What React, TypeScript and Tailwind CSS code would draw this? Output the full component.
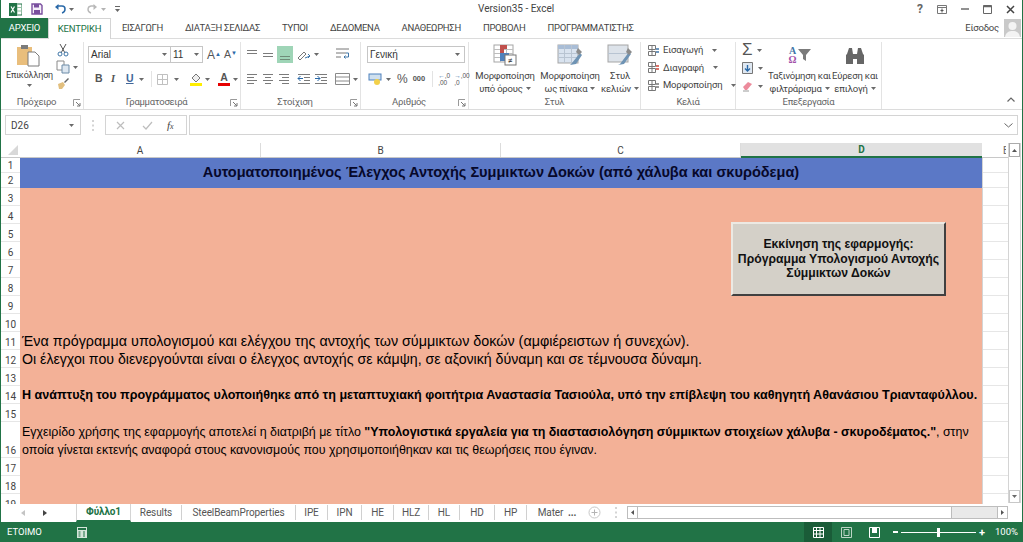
import React from "react";

const ui = "font-['Roboto',sans-serif]";

function Caret({ className = "" }: { className?: string }) {
  return (
    <svg width="5" height="3" viewBox="0 0 5 3" className={className}>
      <path d="M0 0h5L2.500 3z" fill="#6a6a6a" />
    </svg>
  );
}

function Launcher() {
  return (
    <svg width="8" height="8" viewBox="0 0 8 8">
      <path d="M0.500 7V0.500H7" fill="none" stroke="#9a9a9a" />
      <path d="M3 3l4 4M7 4v3H4" fill="none" stroke="#777" />
    </svg>
  );
}

function Lines({ rows, active, arrow }: { rows: number[][]; active?: boolean; arrow?: "in" | "out" }) {
  return (
    <svg width="16" height="14" viewBox="0 0 16 14">
      {rows.map((r, i) => (
        <path key={i} d={`M${r[0]} ${r[2]}.500H${r[1]}`} stroke={active ? "#6f8c78" : "#7b7b7b"} />
      ))}
      {arrow === "out" && <path d="M8 6.500H3M5.500 4L3 6.500 5.500 9" fill="none" stroke="#2a69a8" />}
      {arrow === "in" && <path d="M3 6.500h5M5.500 4L8 6.500 5.500 9" fill="none" stroke="#2a69a8" />}
    </svg>
  );
}

function Group({ label, launcher, width, children }: { label: string; launcher?: boolean; width: string; children: React.ReactNode }) {
  return (
    <div className={`${width} shrink-0 h-[67px] flex flex-col border-r border-[#e3e3e3]`}>
      <div className="h-[54px] flex">{children}</div>
      <div className={`h-[12px] flex items-center relative text-[9.500px] text-[#666] tracking-[-0.3px] ${launcher ? "pr-[11px]" : ""}`}>
        <div className="flex-1 text-center">{label}</div>
        {launcher && <div className="absolute right-[2px] top-[3px]"><Launcher /></div>}
      </div>
    </div>
  );
}

function BigLabel({ l1, l2, caret }: { l1: string; l2: string; caret?: boolean }) {
  return (
    <div className="text-[9.500px] tracking-[-0.2px] leading-[13px] text-[#444] text-center whitespace-nowrap mt-[3px]">
      <div>{l1}</div>
      <div className="flex items-center justify-center gap-[3px]">{l2}{caret && <Caret />}</div>
    </div>
  );
}

function TableIcon({ variant }: { variant: "cond" | "table" | "cell" }) {
  if (variant === "cond")
    return (
      <svg width="24" height="22" viewBox="0 0 24 22">
        <rect x="1" y="1" width="19" height="17" fill="#fff" stroke="#a5a5a5" />
        <path d="M1 5.500h19M1 9.500h19M1 13.500h19M7.500 1v17M13.500 1v17" stroke="#bdbdbd" />
        <rect x="7" y="1" width="7" height="4" fill="#c0504d" />
        <rect x="7" y="5" width="4" height="4" fill="#c0504d" />
        <rect x="7" y="9" width="9" height="4" fill="#4f81bd" />
        <rect x="7" y="13" width="5" height="4" fill="#4f81bd" />
        <rect x="12" y="11" width="11" height="10" fill="#fff" stroke="#777" />
        <text x="14.500" y="19.500" fontSize="9" fill="#333">≠</text>
      </svg>
    );
  if (variant === "table")
    return (
      <svg width="26" height="22" viewBox="0 0 26 22">
        <rect x="1" y="1" width="20" height="18" fill="#d9e3ef" stroke="#a5a5a5" />
        <rect x="1" y="1" width="20" height="4" fill="#a9bdd6" />
        <path d="M1 9.500h20M1 13.500h20M7.500 1v18M14.500 1v18" stroke="#b8c4d2" />
        <path d="M15 19l8-10 2 2-6 9-6 1z" fill="#6e93b4" />
        <path d="M21 4l4 4-3 3-3-3z" fill="#8b8b8b" />
      </svg>
    );
  return (
    <svg width="26" height="22" viewBox="0 0 26 22">
      <rect x="1" y="1" width="20" height="17" fill="#dde3ea" stroke="#a5a5a5" />
      <path d="M1 9.500h20" stroke="#b8c4d2" />
      <path d="M13 20l9-12 2 2-7 10-6 1z" fill="#6e93b4" />
      <path d="M21 4l4 4-3 3-3-3z" fill="#8b8b8b" />
    </svg>
  );
}

const TAB_CLS = "text-[9.500px] tracking-[-0.3px] text-[#444] whitespace-nowrap";

function TitleBar() {
  return (
    <div className="h-[18px] flex items-center relative">
      <div className="flex items-center ml-[8px]">
        <svg width="13" height="13" viewBox="0 0 13 13">
          <rect x="5" y="1" width="8" height="11" fill="#fff" stroke="#217346" />
          <path d="M8 1v11M5 4.500h8M5 8h8" stroke="#8fbf9f" />
          <rect x="0" y="0" width="8" height="13" fill="#217346" />
          <path d="M2 3.500l3.500 6M5.500 3.500l-3.500 6" stroke="#fff" strokeWidth="1.200" />
        </svg>
        <svg width="12" height="12" viewBox="0 0 12 12" className="ml-[9px]">
          <path d="M1 1h8.500L11 2.500V11H1z" fill="#f4eff8" stroke="#7a4f9f" strokeWidth="1.400" />
          <rect x="3" y="1" width="5" height="3.500" fill="#7a4f9f" />
          <rect x="3" y="7" width="6" height="4" fill="#7a4f9f" />
        </svg>
        <svg width="12" height="11" viewBox="0 0 12 11" className="ml-[11px]">
          <path d="M3 2h5a3 3 0 0 1 3 3v0a4 4 0 0 1-3 4" fill="none" stroke="#2a69a8" strokeWidth="1.500" />
          <path d="M4.500 0L1 3l3.500 3z" fill="#2a69a8" />
        </svg>
        <Caret className="ml-[3px]" />
        <svg width="12" height="11" viewBox="0 0 12 11" className="ml-[12px]">
          <path d="M9 2H5a3.500 3.500 0 0 0-3 3 4 4 0 0 0 3 4" fill="none" stroke="#b9b9b9" strokeWidth="1.400" />
          <path d="M7.500 0L11 3 7.500 6z" fill="#b9b9b9" />
        </svg>
        <Caret className="ml-[3px] opacity-50" />
        <svg width="5" height="7" viewBox="0 0 5 7" className="ml-[9px]">
          <path d="M0 .500h5" stroke="#666" />
          <path d="M0 3h5L2.500 6z" fill="#666" />
        </svg>
      </div>
      <div className="absolute left-[477px] top-[2px] text-[10px] leading-[14px] text-[#444] whitespace-nowrap">Version35 - Excel</div>
      <div className="ml-auto flex items-center text-[#555] mr-[7px]">
        <span className="text-[12px] leading-none font-bold text-[#666]">?</span>
        <svg width="10" height="9" viewBox="0 0 10 9" className="ml-[14px]">
          <path d="M.500.500h9v8h-9zM.500 2.500h9" fill="none" stroke="#777" />
          <path d="M5 3.500v4M3.500 5.500h3" stroke="#555" />
        </svg>
        <svg width="8" height="2" viewBox="0 0 8 2" className="ml-[14px]"><path d="M0 1h8" stroke="#555" strokeWidth="1.300" /></svg>
        <svg width="9" height="9" viewBox="0 0 9 9" className="ml-[14px]">
          <path d="M.500.500h8v8h-8z" fill="none" stroke="#666" />
          <path d="M0 1.500h9" stroke="#666" strokeWidth="1.500" />
        </svg>
        <svg width="9" height="9" viewBox="0 0 9 9" className="ml-[14px]">
          <path d="M1 1l7 7M8 1l-7 7" stroke="#444" strokeWidth="1.500" />
        </svg>
      </div>
    </div>
  );
}

function TabRow() {
  return (
    <div className="h-[20px] flex items-stretch">
      <div className="w-[47px] bg-[#217346] text-white text-[9.500px] tracking-[-0.2px] flex items-center justify-center">ΑΡΧΕΙΟ</div>
      <div className="w-[63px] -mb-px z-10 bg-white border-x border-t border-[#d4d4d4] text-[#217346] text-[9.500px] tracking-[-0.2px] flex items-center justify-center">ΚΕΝΤΡΙΚΗ</div>
      <div className={`${TAB_CLS} ml-[11px] flex items-center gap-[22px]`}>
        <span>ΕΙΣΑΓΩΓΗ</span>
        <span>ΔΙΑΤΑΞΗ ΣΕΛΙΔΑΣ</span>
        <span>ΤΥΠΟΙ</span>
        <span>ΔΕΔΟΜΕΝΑ</span>
        <span>ΑΝΑΘΕΩΡΗΣΗ</span>
        <span>ΠΡΟΒΟΛΗ</span>
        <span>ΠΡΟΓΡΑΜΜΑΤΙΣΤΗΣ</span>
      </div>
      <div className="ml-auto flex items-center mr-[1px]">
        <span className="text-[9.500px] tracking-[-0.2px] text-[#444] mr-[5px]">Είσοδος</span>
        <svg width="17" height="18" viewBox="0 0 17 18">
          <rect width="17" height="18" fill="#c9c9c9" />
          <circle cx="8.500" cy="7" r="4" fill="#f3f3f3" />
          <path d="M1 18c1-5 4-6 7.500-6s6.500 1 7.500 6z" fill="#f3f3f3" />
        </svg>
      </div>
    </div>
  );
}

function Ribbon() {
  const combo = "h-[17px] bg-white border border-[#c6c6c6] flex items-center text-[10px] text-[#333] font-['Liberation_Sans',sans-serif]";
  return (
    <div className="h-[72px] bg-white border-y border-[#dcdcdc] flex pt-[3px] text-[#444]">
      <Group label="Πρόχειρο" launcher width="w-[83px]">
        <div className="w-[52px] flex flex-col items-center">
          <svg width="24" height="24" viewBox="0 0 24 24" className="mt-[1px] ml-[2px]">
            <rect x="1" y="4" width="15" height="18" fill="#e9be7c" />
            <rect x="5" y="2" width="7" height="4" fill="#7b7b7b" />
            <path d="M12 9h7l4 4v10H12z" fill="#fff" stroke="#7b7b7b" />
          </svg>
          <div className="text-[9px] tracking-[-0.2px] leading-[12px] mt-[2px] ml-[5px]">Επικόλληση</div>
          <Caret className="mt-[3px] ml-[4px]" />
        </div>
        <div className="flex flex-col ml-[2px] gap-[3px] pt-[1px]">
          <svg width="12" height="14" viewBox="0 0 12 14" className="ml-[2px]">
            <path d="M3 1l5 9M9 1L4 10" stroke="#555" />
            <circle cx="3" cy="11" r="2" fill="none" stroke="#3f76a8" />
            <circle cx="9" cy="11" r="2" fill="none" stroke="#3f76a8" />
          </svg>
          <div className="flex items-center gap-[3px]">
            <svg width="14" height="14" viewBox="0 0 14 14" className="ml-[1px]">
              <path d="M1 1h7v9H1z" fill="#fff" stroke="#8a8a8a" />
              <path d="M6 5h7v8H6z" fill="#dce6f0" stroke="#6c8ca8" />
            </svg>
            <Caret />
          </div>
          <svg width="14" height="13" viewBox="0 0 14 13" className="ml-[1px]">
            <path d="M8 5l4-4 1 1-4 4z" fill="#666" />
            <path d="M2 7l5-2 2 3-3 4H3z" fill="#e2bf7e" />
          </svg>
        </div>
      </Group>

      <Group label="Γραμματοσειρά" launcher width="w-[157px]">
        <div className="flex flex-col pl-[4px] pt-[4px]">
          <div className="flex items-center">
            <div className={`${combo} w-[83px] pl-[2px] pr-[3px] justify-between`}>Arial<Caret /></div>
            <div className={`${combo} w-[33px] -ml-px pl-[2px] pr-[3px] justify-between`}>11<Caret /></div>
            <span className="ml-[4px] text-[12px] leading-none text-[#555] font-['Liberation_Sans',sans-serif]">A<sup className="text-[6px] text-[#2a69a8]">▲</sup></span>
            <span className="ml-[3px] text-[10.500px] leading-none text-[#555] font-['Liberation_Sans',sans-serif]">A<sup className="text-[6px] text-[#2a69a8]">▼</sup></span>
          </div>
          <div className="flex items-center h-[18px] mt-[7px] pl-[7px] font-['Liberation_Sans',sans-serif] text-[10.500px] text-[#555]">
            <span className="w-[14px] font-bold">B</span>
            <span className="w-[17px] font-['Liberation_Serif',serif] italic font-bold pl-[2px]">I</span>
            <span className="w-[12px] underline font-bold text-[#41679a]">U</span>
            <Caret className="ml-[1px]" />
            <span className="w-px h-[16px] bg-[#e3e3e3] ml-[7px]" />
            <svg width="11" height="11" viewBox="0 0 11 11" className="ml-[5px]">
              <path d="M.500.500h10v10H.500zM.500 5.500h10M5.500.500v10" fill="none" stroke="#c0c0c0" />
            </svg>
            <Caret className="ml-[6px]" />
            <svg width="12" height="14" viewBox="0 0 12 14" className="ml-[11px]">
              <path d="M2 6l4-4 4 4-4 4z" fill="#eee" stroke="#777" />
              <rect x="0" y="11" width="12" height="3" fill="#ffee00" />
            </svg>
            <Caret className="ml-[3px]" />
            <div className="ml-[8px] flex flex-col items-center w-[12px] leading-[11px] font-bold text-[#555]">
              A<span className="w-[12px] h-[3px] bg-[#e60000]" />
            </div>
            <Caret className="ml-[3px]" />
          </div>
        </div>
      </Group>

      <Group label="Στοίχιση" launcher width="w-[120px]">
        <div className="flex flex-col pl-[3px] w-[87px]">
          <div className="flex items-center h-[17px] mt-[4px]">
            <div className="w-[16px]"><Lines rows={[[3, 13, 2], [3, 13, 5]]} /></div>
            <div className="w-[16px]"><Lines rows={[[3, 13, 5], [3, 13, 8]]} /></div>
            <div className="w-[16px] h-[17px] ml-[1px] bg-[#9fd5b7] flex items-end pb-[1px]"><Lines rows={[[3, 13, 8], [3, 13, 11]]} active /></div>
            <svg width="14" height="12" viewBox="0 0 14 12" className="ml-[4px]">
              <path d="M1 9l6-6 2 2-6 6z" fill="none" stroke="#777" />
              <path d="M8 9l5-2M11 5l2 2-2 2" fill="none" stroke="#3f76a8" />
            </svg>
            <Caret className="ml-[3px]" />
          </div>
          <div className="flex items-center h-[16px] mt-[8px]">
            <div className="w-[16px]"><Lines rows={[[3, 13, 2], [3, 10, 5], [3, 13, 8], [3, 10, 11]]} /></div>
            <div className="w-[16px]"><Lines rows={[[3, 13, 2], [5, 11, 5], [3, 13, 8], [5, 11, 11]]} /></div>
            <div className="w-[19px]"><Lines rows={[[3, 13, 2], [6, 13, 5], [3, 13, 8], [6, 13, 11]]} /></div>
            <div className="w-[17px]"><Lines rows={[[3, 15, 2], [9, 15, 5], [9, 15, 8], [3, 15, 11]]} arrow="out" /></div>
            <div className="w-[16px]"><Lines rows={[[3, 15, 2], [9, 15, 5], [9, 15, 8], [3, 15, 11]]} arrow="in" /></div>
          </div>
        </div>
        <div className="flex flex-col pl-[7px]">
          <svg width="15" height="13" viewBox="0 0 15 13" className="mt-[5px]">
            <path d="M1 2h13M1 6h10M1 10h5" stroke="#777" />
            <path d="M11 6h2.500v4H9M10.500 8.500L9 10l1.500 1.500" fill="none" stroke="#3f76a8" />
          </svg>
          <div className="flex items-center mt-[13px] gap-[3px]">
            <svg width="15" height="12" viewBox="0 0 15 12">
              <path d="M.500.500h14v11H.500zM.500 4h14M.500 8h14" fill="none" stroke="#8a8a8a" />
            </svg>
            <Caret />
          </div>
        </div>
      </Group>

      <Group label="Αριθμός" launcher width="w-[108px]">
        <div className="flex flex-col pl-[6px] pt-[4px]">
          <div className={`${combo} w-[98px] pl-[2px] pr-[4px] justify-between`}>Γενική<Caret /></div>
          <div className="flex items-center mt-[8px] h-[16px] font-['Liberation_Sans',sans-serif]">
            <svg width="15" height="13" viewBox="0 0 15 13" className="ml-[1px]">
              <rect x="1" y="1" width="12" height="6" fill="#cfe0ef" stroke="#4f81bd" />
              <circle cx="9" cy="9" r="3" fill="#f2d04a" />
            </svg>
            <Caret className="ml-[3px]" />
            <span className="ml-[6px] text-[12px] text-[#555]">%</span>
            <span className="ml-[5px] text-[7.500px] text-[#555] font-bold">000</span>
            <span className="w-px h-[16px] bg-[#e3e3e3] ml-[7px]" />
            <div className="ml-[5px] text-[6.500px] leading-[7px] text-[#555] w-[16px] whitespace-nowrap"><span className="text-[#3f76a8]">←</span>,0<br />,00</div>
            <div className="ml-[0px] text-[6.500px] leading-[7px] text-[#555] w-[15px] whitespace-nowrap"><span className="text-[#3f76a8]">→</span>,00<br />,0</div>
          </div>
        </div>
      </Group>

      <Group label="Στυλ" width="w-[172px]">
        <div className="w-[66px] flex flex-col items-center pt-[2px] ml-[3px]">
          <TableIcon variant="cond" />
          <BigLabel l1="Μορφοποίηση" l2="υπό όρους" caret />
        </div>
        <div className="w-[64px] flex flex-col items-center pt-[2px]">
          <TableIcon variant="table" />
          <BigLabel l1="Μορφοποίηση" l2="ως πίνακα" caret />
        </div>
        <div className="w-[36px] flex flex-col items-center pt-[2px]">
          <TableIcon variant="cell" />
          <BigLabel l1="Στυλ" l2="κελιών" caret />
        </div>
      </Group>

      <Group label="Κελιά" width="w-[95px]">
        <div className="flex flex-col pl-[7px] pt-[1px] gap-[3.500px] text-[9.500px] tracking-[-0.2px] leading-[14px]">
          {[["Εισαγωγή", "#3f76a8"], ["Διαγραφή", "#d04437"], ["Μορφοποίηση", "#777"]].map(([t, c]) => (
            <div key={t} className="flex items-center h-[14px] gap-[3px]">
              <svg width="12" height="11" viewBox="0 0 12 11">
                <path d="M.500.500h7v4h-7zM.500 6.500h7v4h-7zM4 .500v10" fill="none" stroke="#777" />
                <path d="M8 4h3M8 7h3" stroke={c} strokeWidth="1.500" />
              </svg>
              <span>{t}</span>
              <Caret className="ml-[6px]" />
            </div>
          ))}
        </div>
      </Group>

      <Group label="Επεξεργασία" width="w-[146px]">
        <div className="w-[31px] shrink-0 flex flex-col pl-[6px] pt-[1px] gap-[4px]">
          <div className="flex items-center h-[14px] gap-[4px]">
            <span className="text-[17px] leading-[14px] text-[#555] font-['Liberation_Sans',sans-serif]">Σ</span>
            <Caret />
          </div>
          <div className="flex items-center h-[14px] gap-[5px]">
            <svg width="11" height="12" viewBox="0 0 11 12">
              <path d="M.500.500h10v11H.500z" fill="#dfe8f2" stroke="#777" />
              <path d="M5.500 3v6M3 6.500L5.500 9 8 6.500" fill="none" stroke="#2a69a8" strokeWidth="1.400" />
            </svg>
            <Caret />
          </div>
          <div className="flex items-center h-[14px] gap-[5px]">
            <svg width="11" height="12" viewBox="0 0 11 12">
              <path d="M1 7l5-5 4 2-5 6H3z" fill="#ec8b9c" />
              <path d="M1 11h6" stroke="#999" />
            </svg>
            <Caret />
          </div>
        </div>
        <div className="w-[65px] flex flex-col items-center">
          <div className="h-[22px] mt-[2px] flex items-center gap-[1px] font-['Liberation_Serif',serif] text-[10px] leading-[9px] font-bold">
            <div className="flex flex-col items-center"><span className="text-[#3f76a8]">A</span><span className="text-[#a14fa8]">Ω</span></div>
            <svg width="13" height="14" viewBox="0 0 13 14"><path d="M0 1h13L8 7v6l-3-2V7z" fill="#7b7b7b" /></svg>
          </div>
          <BigLabel l1="Ταξινόμηση και" l2="φιλτράρισμα" caret />
        </div>
        <div className="w-[46px] flex flex-col items-center">
          <svg width="20" height="20" viewBox="0 0 20 20" className="mt-[4px]">
            <path d="M2 8l2-6h3l1 6v10H1V9zM18 8l-2-6h-3l-1 6v10h7V9zM8 8h4v5H8z" fill="#666" />
          </svg>
          <BigLabel l1="Εύρεση και" l2="επιλογή" caret />
        </div>
      </Group>

      <div className="flex-1 flex items-end justify-end pr-[7px] pb-[7px]">
        <svg width="8" height="5" viewBox="0 0 8 5"><path d="M.500 4.500L4 1l3.500 3.500" fill="none" stroke="#666" strokeWidth="1.200" /></svg>
      </div>
    </div>
  );
}

function FormulaBar() {
  return (
    <div className="h-[33px] bg-white flex items-center pl-[4px] pr-[4px] pt-[5px] pb-[8px]">
      <div className="w-[76px] h-[20px] border border-[#d4d4d4] flex items-center justify-between pl-[5px] pr-[6px] text-[10px] text-[#444]">D26<Caret /></div>
      <div className="w-[24px] flex justify-center text-[8px] leading-[4px] text-[#aaa]">
        <svg width="2" height="11" viewBox="0 0 2 11"><path d="M1 0v2M1 4.500v2M1 9v2" stroke="#aaa" /></svg>
      </div>
      <div className="w-[82px] h-[20px] border border-[#d4d4d4] flex items-center pl-[10px] text-[#bbb]">
        <svg width="9" height="9" viewBox="0 0 9 9"><path d="M1 1l7 7M8 1L1 8" stroke="#bdbdbd" strokeWidth="1.200" /></svg>
        <svg width="11" height="9" viewBox="0 0 11 9" className="ml-[17px]"><path d="M1 5l3 3 6-7" fill="none" stroke="#bdbdbd" strokeWidth="1.200" /></svg>
        <span className="ml-[14px] font-['Liberation_Serif',serif] italic text-[11px] text-[#444]">f<span className="text-[8px]">x</span></span>
      </div>
      <div className="flex-1 h-[20px] ml-[2px] border border-[#d4d4d4] flex items-center justify-end pr-[4px]">
        <svg width="9" height="5" viewBox="0 0 9 5"><path d="M.500.500L4.500 4l4-3.500" fill="none" stroke="#666" /></svg>
      </div>
    </div>
  );
}

function ColumnHeaders() {
  const cls = "h-[14px] flex items-center justify-center text-[10px] text-[#444] border-r border-[#dcdcdc]";
  return (
    <div className="flex h-[15px] bg-white text-[#444] border-b border-[#c8c8c8]">
      <div className="w-[19px] h-[14px] flex items-end justify-end pr-[2px] pb-[2px]">
        <svg width="10" height="10" viewBox="0 0 10 10"><path d="M10 0v10H0z" fill="#d8d8d8" /></svg>
      </div>
      <div className={`${cls} w-[241px]`}>A</div>
      <div className={`${cls} w-[240px]`}>B</div>
      <div className={`${cls} w-[240px]`}>C</div>
      <div className="w-[241px] h-[15px] bg-[#e1e1e1] border-b-2 border-[#217346] flex items-center justify-center text-[10px] font-bold text-[#217346]">D</div>
      <div className="w-[24px] pl-[21px] flex items-center text-[10px] text-[#666] overflow-hidden">E</div>
    </div>
  );
}

const ROWS: [number, number][] = [
  [1, 15], [2, 15], [3, 18], [4, 18], [5, 18], [6, 18], [7, 18], [8, 18], [9, 18], [10, 18],
  [11, 18], [12, 18], [13, 18], [14, 18], [15, 18], [16, 36], [17, 18], [18, 18], [19, 18],
];

function Sheet() {
  return (
    <div className="flex-1 flex min-h-0 relative">
      <div className="flex-1 min-w-0">
        <ColumnHeaders />
        <div className="flex h-[346px] overflow-hidden">
          <div className="w-[19px] shrink-0 bg-white">
            {ROWS.map(([n, h]) => (
              <div key={n} style={{ height: h }} className="flex items-end justify-center text-[10px] leading-[13px] text-[#444] border-b border-[#e6e6e6]">{n}</div>
            ))}
          </div>
          <div className="w-[962px] shrink-0 font-['Liberation_Sans',sans-serif] text-black relative">
            <div className="h-[30px] bg-[#5b78c6] flex items-center justify-center font-bold text-[14.550px] text-[#07082a]">Αυτοματοποιημένος Έλεγχος Αντοχής Συμμικτων Δοκών (από χάλυβα και σκυρόδεμα)</div>
            <div className="h-[320px] bg-[#f3b197] pl-[2px] pt-[144px] whitespace-nowrap">
              <div className="h-[18px] text-[14.340px] leading-[18px]">Ένα πρόγραμμα υπολογισμού και ελέγχου της αντοχής των σύμμικτων δοκών (αμφιέρειστων ή συνεχών).</div>
              <div className="h-[18px] text-[14.170px] leading-[18px]">Οι έλεγχοι που διενεργούνται είναι ο έλεγχος αντοχής σε κάμψη, σε αξονική δύναμη και σε τέμνουσα δύναμη.</div>
              <div className="h-[18px] mt-[18px] text-[12.570px] leading-[18px] font-bold">Η ανάπτυξη του προγράμματος υλοποιήθηκε από τη μεταπτυχιακή φοιτήτρια Αναστασία Τασιούλα, υπό την επίβλεψη του καθηγητή Αθανάσιου Τριανταφύλλου.</div>
              <div className="mt-[19px] text-[12.450px] leading-[18px]">
                Εγχειρίδο χρήσης της εφαρμογής αποτελεί η διατριβή με τίτλο <b>"Υπολογιστικά εργαλεία για τη διαστασιολόγηση σύμμικτων στοιχείων χάλυβα - σκυροδέματος."</b>, στην
                <br />
                οποία γίνεται εκτενής αναφορά στους κανονισμούς που χρησιμοποιήθηκαν και τις θεωρήσεις που έγιναν.
              </div>
            </div>
            <div className="absolute left-[711px] top-[64px] w-[215px] h-[74px] bg-[#d4d0c8] border-t-2 border-l-2 border-[#ece9e3] border-r-2 border-b-2 border-r-[#404040] border-b-[#404040] flex flex-col items-center justify-center text-[12.200px] leading-[14.500px] font-bold text-[#111]">
              <div>Εκκίνηση της εφαρμογής:</div>
              <div>Πρόγραμμα Υπολογισμού Αντοχής</div>
              <div>Σύμμικτων Δοκών</div>
            </div>
          </div>
          <div className="flex-1 border-l border-[#d4d4d4] bg-white">
            {ROWS.map(([n, h]) => (
              <div key={n} style={{ height: h }} className="border-b border-[#e6e6e6]" />
            ))}
          </div>
        </div>
      </div>
      <div className="w-[13px] shrink-0 mr-[1px] flex flex-col border-x border-[#d4d4d4] bg-white">
        <div className="h-[14px] border border-[#ababab] flex items-center justify-center"><svg width="5" height="3" viewBox="0 0 5 3"><path d="M0 3h5L2.500 0z" fill="#555" /></svg></div>
        <div className="flex-1" />
        <div className="h-[13px] border border-[#c8c8c8] flex items-center justify-center"><Caret /></div>
      </div>
    </div>
  );
}

function SheetTabs() {
  const names: [string, string][] = [
    ["Results", "w-[51px]"], ["SteelBeamProperties", "w-[114px]"], ["IPE", "w-[32px]"], ["IPN", "w-[34px]"],
    ["HE", "w-[32px]"], ["HLZ", "w-[35px]"], ["HL", "w-[31px]"], ["HD", "w-[35px]"], ["HP", "w-[32px]"],
  ];
  return (
    <div className="h-[19px] bg-white flex items-center text-[10px] tracking-[-0.1px] text-[#555]">
      <div className="w-[75px] flex items-center pl-[20px] gap-[18px]">
        <svg width="4" height="6" viewBox="0 0 4 6"><path d="M4 0v6L0 3z" fill="#c4c4c4" /></svg>
        <svg width="4" height="6" viewBox="0 0 4 6"><path d="M0 0v6l4-3z" fill="#444" /></svg>
      </div>
      <div className="w-[55px] h-[19px] border-x border-b-2 border-[#d4d4d4] border-b-[#217346] text-[#217346] font-bold flex items-center justify-center -mt-px">Φύλλο1</div>
      {names.map(([n, w]) => (
        <div key={n} className={`${w} h-[15px] border-r border-[#d0d0d0] flex items-center justify-center`}>{n}</div>
      ))}
      <div className="w-[47px] text-center">Mater</div>
      <span className="ml-[-6px] w-[16px] font-bold">...</span>
      <svg width="13" height="13" viewBox="0 0 13 13" className="ml-[4px]">
        <circle cx="6.500" cy="6.500" r="5.500" fill="none" stroke="#c8c8c8" />
        <path d="M6.500 3.500v6M3.500 6.500h6" stroke="#b4b4b4" />
      </svg>
      <svg width="2" height="11" viewBox="0 0 2 11" className="ml-[14px]"><path d="M1 0v2M1 4.500v2M1 9v2" stroke="#aaa" /></svg>
      <div className="flex-1 h-[13px] ml-[10px] mr-[14px] flex bg-[#e9e9e9] border border-[#bdbdbd]">
        <div className="w-[10px] border-r border-[#bdbdbd] bg-white flex items-center justify-center">
          <svg width="3" height="5" viewBox="0 0 3 5"><path d="M3 0v5L0 2.500z" fill="#555" /></svg>
        </div>
        <div className="w-[314px] bg-white border-r border-[#bdbdbd]" />
        <div className="flex-1" />
        <div className="w-[10px] border-l border-[#bdbdbd] bg-white flex items-center justify-center">
          <svg width="3" height="5" viewBox="0 0 3 5"><path d="M0 0v5l3-2.500z" fill="#555" /></svg>
        </div>
      </div>
    </div>
  );
}

function StatusBar() {
  return (
    <div className="h-[20px] bg-[#217346] flex items-center text-white text-[9.500px]">
      <span className="ml-[6px]">ΕΤΟΙΜΟ</span>
      <svg width="10" height="11" viewBox="0 0 10 11" className="ml-[35px]">
        <rect width="10" height="11" fill="#d5e5da" />
        <rect x="1" y="1" width="8" height="2" fill="#217346" />
        <path d="M1.500 5h2M6 5h2M1.500 7h2M6 7h2M1.500 9h2M6 9h2" stroke="#217346" />
      </svg>
      <div className="ml-auto flex items-center h-[20px]">
        <div className="w-[28px] h-[20px] bg-[#1a5c38] flex items-center justify-center">
          <svg width="11" height="11" viewBox="0 0 11 11"><path d="M.500.500h10v10H.500zM.500 3.500h10M.500 7h10M3.500.500v10M7 .500v10" fill="none" stroke="#fff" /></svg>
        </div>
        <svg width="11" height="11" viewBox="0 0 11 11" className="ml-[9px]"><path d="M.500.500h10v10H.500z" fill="none" stroke="#bcd5c5" /><path d="M3 2.500h5v6H3z" fill="none" stroke="#bcd5c5" /></svg>
        <svg width="11" height="11" viewBox="0 0 11 11" className="ml-[17px]"><path d="M.500.500h10v10H.500z" fill="none" stroke="#fff" /><path d="M3 0h5v6H3z" fill="#fff" /></svg>
        <span className="ml-[13px] w-[5px] h-[2px] bg-white" />
        <div className="ml-[3px] w-[75px] h-[1px] bg-white relative">
          <span className="absolute left-[36px] -top-[4px] w-[3px] h-[9px] bg-white" />
        </div>
        <span className="ml-[3px] text-[11px] leading-none font-bold">+</span>
        <span className="ml-[10px] mr-[1px] w-[26px]">100%</span>
      </div>
    </div>
  );
}

export default function App() {
  return (
    <div className={`${ui} w-[1023px] h-[542px] overflow-hidden bg-white flex flex-col border-x border-[#217346]`}>
      <TitleBar />
      <TabRow />
      <Ribbon />
      <FormulaBar />
      <Sheet />
      <SheetTabs />
      <StatusBar />
    </div>
  );
}
